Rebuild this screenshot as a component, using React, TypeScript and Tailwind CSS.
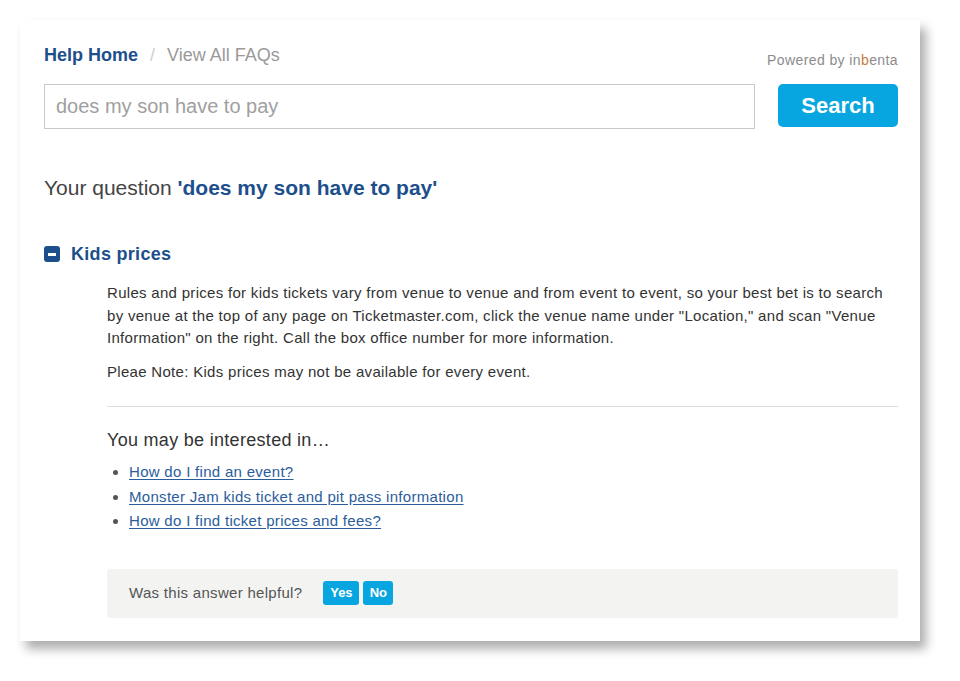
import { useState } from 'react'

const font = { fontFamily: '"Liberation Sans", Arial, Helvetica, sans-serif' }

function MinusBox() {
  return (
    <span className="flex h-4 w-4 shrink-0 items-center justify-center rounded-[3px] bg-[#1d4f8c]">
      <span className="h-[3px] w-[8px] bg-white" />
    </span>
  )
}

export default function App() {
  const [query, setQuery] = useState('')
  const related = [
    'How do I find an event?',
    'Monster Jam kids ticket and pit pass information',
    'How do I find ticket prices and fees?',
  ]

  return (
    <div style={font} className="min-h-[681px] bg-white pl-5 pt-5">
      <div className="h-[621px] w-[900px] bg-white pl-6 pr-[22px] pt-[22px] shadow-[6px_8px_10px_rgba(0,0,0,0.32)]">
        {/* header */}
        <div className="flex items-start justify-between">
          <div className="flex items-center text-[18px] leading-[26px]">
            <a href="#" className="font-bold text-[#1d4f8c]">Help Home</a>
            <span className="mx-[12px] text-[#cfcfcf]">/</span>
            <a href="#" className="text-[#9a9a9a]">View All FAQs</a>
          </div>
          <div className="mt-[10px] text-[14px] leading-[16px] tracking-[0.4px] text-[#8c8c8c]">
            Powered by in<span className="text-[#c9793d]">b</span>enta
          </div>
        </div>

        {/* search */}
        <div className="mt-4 flex items-start gap-[23px]">
          <input
            value={query}
            onChange={(e) => setQuery(e.target.value)}
            placeholder="does my son have to pay"
            className="h-[45px] w-[711px] border border-[#c8c8c8] px-[11px] text-[20px] text-[#333] outline-none placeholder:text-[#a0a0a0]"
          />
          <button className="h-[43px] w-[120px] rounded-[5px] bg-[#08a6e0] text-[22px] font-bold text-white">
            Search
          </button>
        </div>

        {/* question */}
        <h1 className="mt-[45px] text-[21px] leading-[28px] text-[#444]">
          Your question <span className="font-bold text-[#1d4f8c]">'does my son have to pay'</span>
        </h1>

        {/* answer */}
        <div className="mt-[39px] flex items-center gap-[11px]">
          <MinusBox />
          <h2 className="text-[18px] font-bold leading-[26px] tracking-[0.3px] text-[#1d4f8c]">Kids prices</h2>
        </div>

        <div className="ml-[63px] mt-[15px] text-[15px] leading-[22.5px] tracking-[0.3px] text-[#333]">
          <p>
            Rules and prices for kids tickets vary from venue to venue and from event to event, so your best bet is to search
            by venue at the top of any page on Ticketmaster.com, click the venue name under "Location," and scan "Venue
            Information" on the right. Call the box office number for more information.
          </p>
          <p className="mt-[11px]">Pleae Note: Kids prices may not be available for every event.</p>

          <div className="mt-[23px] border-t border-[#dddddd]" />

          <h3 className="mt-[21px] text-[18px] leading-[24px] tracking-[0.3px] text-[#333]">You may be interested in…</h3>
          <ul className="mt-2 list-disc pl-[22px] text-[#444] marker:text-[#555]">
            {related.map((r) => (
              <li key={r} className="leading-[24.5px]">
                <a href="#" className="text-[#2b5d9c] underline underline-offset-2">{r}</a>
              </li>
            ))}
          </ul>

          <div className="mt-[35px] flex h-[49px] items-center rounded-[3px] bg-[#f3f4f2] pl-[22px]">
            <span className="text-[15px] text-[#555]">Was this answer helpful?</span>
            <div className="ml-[21px] flex gap-[4px] tracking-normal">
              <button className="h-6 w-9 rounded-[3px] bg-[#08a6e0] text-[13px] font-bold text-white">Yes</button>
              <button className="h-6 w-[30px] rounded-[3px] bg-[#08a6e0] text-[13px] font-bold text-white">No</button>
            </div>
          </div>
        </div>
      </div>
    </div>
  )
}
